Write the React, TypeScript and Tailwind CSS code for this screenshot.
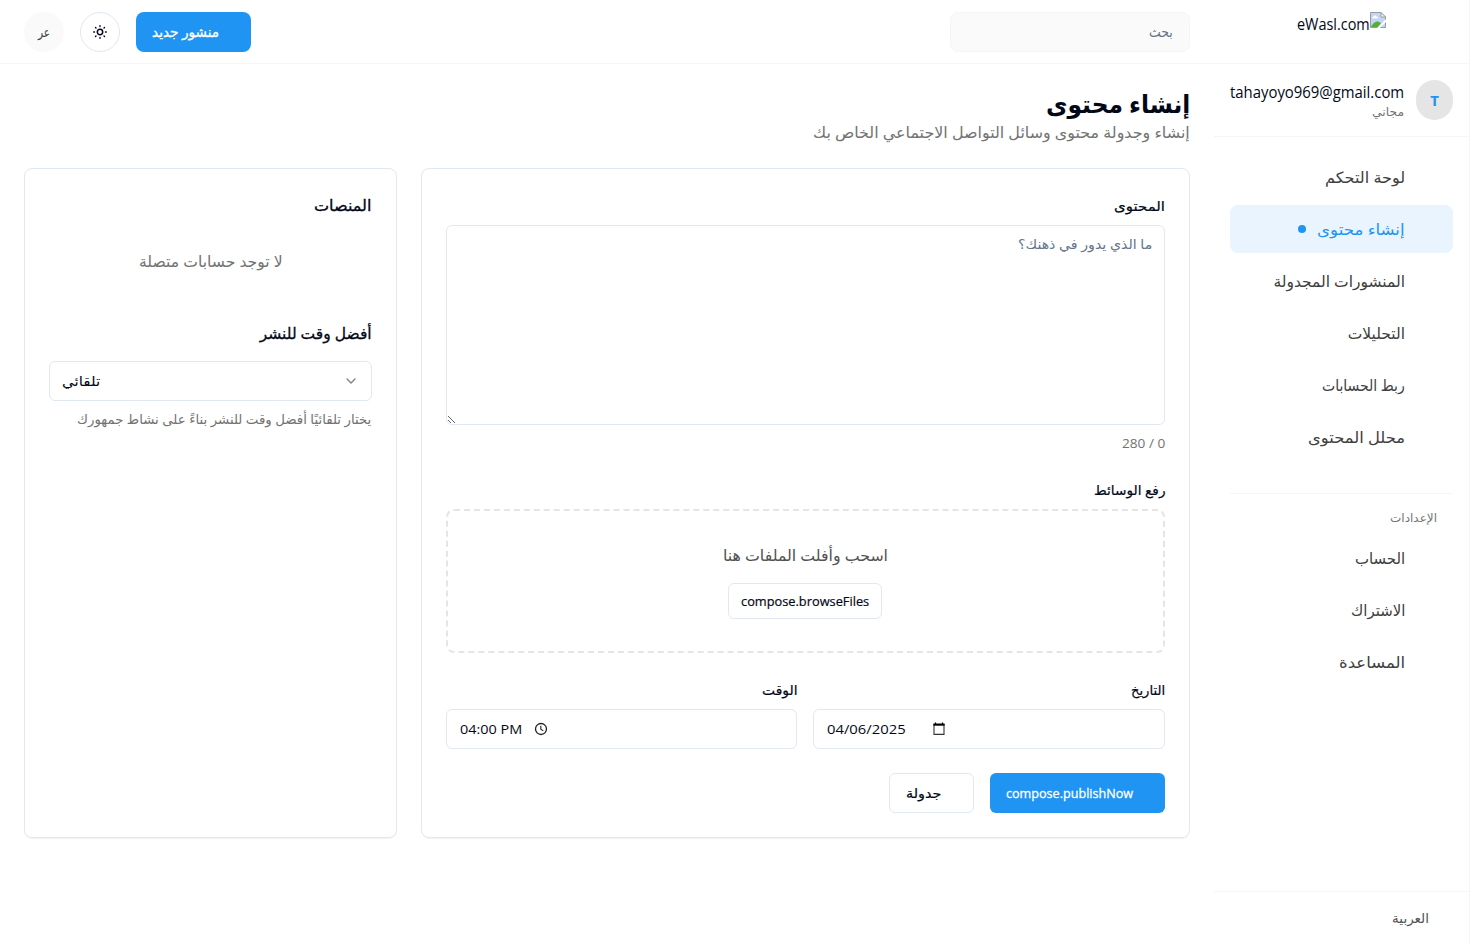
import { useLayoutEffect, useRef, useState } from "react";
import { ChevronDown } from "lucide-react";

/** Single line of text, condensed or widened to fill the width given by its class. */
function Fit({ children, className = "", ltr = false }: { children: string; className?: string; ltr?: boolean }) {
  const outer = useRef<HTMLSpanElement>(null);
  const inner = useRef<HTMLSpanElement>(null);
  const [scale, setScale] = useState(1);
  useLayoutEffect(() => {
    if (outer.current && inner.current && inner.current.offsetWidth > 0) {
      setScale(outer.current.clientWidth / inner.current.offsetWidth);
    }
  }, [children]);
  return (
    <span ref={outer} dir={ltr ? "ltr" : "rtl"} className={`flex shrink-0 ${className}`}>
      <span
        ref={inner}
        className={`block shrink-0 whitespace-nowrap ${ltr ? "origin-left" : "origin-right"}`}
        style={{ transform: `scaleX(${scale})` }}
      >
        {children}
      </span>
    </span>
  );
}

const mainNav = [
  { label: "لوحة التحكم", width: "w-[80px]" },
  { label: "إنشاء محتوى", width: "w-[88px]", active: true },
  { label: "المنشورات المجدولة", width: "w-[132px]" },
  { label: "التحليلات", width: "w-[57px]" },
  { label: "ربط الحسابات", width: "w-[83px]" },
  { label: "محلل المحتوى", width: "w-[97px]" },
];

const settingsNav = [
  { label: "الحساب", width: "w-[50px]" },
  { label: "الاشتراك", width: "w-[54px]" },
  { label: "المساعدة", width: "w-[66px]" },
];

function NavItem({ label, width, active }: { label: string; width: string; active?: boolean }) {
  return (
    <a
      className={`flex h-12 items-center gap-[11px] rounded-lg pr-12 text-[15.5px] leading-6 ${
        active ? "bg-[#e9f4fe] text-[#2094f3]" : "text-[#404040]"
      }`}
    >
      <Fit className={width}>{label}</Fit>
      {active && <span className="size-2 rounded-full bg-[#2094f3]" />}
    </a>
  );
}

function SunIcon() {
  return (
    <svg width="16" height="16" viewBox="0 0 16 16" fill="none" stroke="#020817" strokeLinecap="round">
      <circle cx="8" cy="8" r="2.700" strokeWidth="1.500" />
      <path
        d="M8 1.700V2.500M8 13.500V14.300M1.700 8H2.500M13.500 8H14.300M3.500 3.500 4 4M12 12 12.500 12.500M3.500 12.500 4 12M12 4 12.500 3.500"
        strokeWidth="1.400"
      />
    </svg>
  );
}

function BrokenImage() {
  return (
    <svg width="16" height="16" viewBox="0 0 16 16" className="shrink-0">
      <path d="M.5 .5H11L15.500 5V15.500H.5Z" fill="#c5d5f5" />
      <path d="M2 6.200c0-1 .8-1.600 1.600-1.500.3-1.500 2.600-1.500 3 0 1 0 1.600.600 1.600 1.500Z" fill="#fff" />
      <path d="M1 15c1-3 4-5.500 6.500-5.500 1.500 0 3 1 3.500 2L8 15Z" fill="#56ae37" />
      <path d="M.5 15.500V.5H11L15.500 5V15.500Z" fill="none" stroke="#9b9b9b" />
      <path d="M11 .5V5H15.500Z" fill="#fff" stroke="#9b9b9b" />
      <path d="M16.500 8 8 16.500" stroke="#fff" strokeWidth="2" />
    </svg>
  );
}

function Sidebar() {
  return (
    <aside className="flex w-64 shrink-0 flex-col border-r border-[#f5f5f5]">
      <div className="flex h-16 items-start border-b border-[#f5f5f5] pt-3 pr-[83px]">
        <BrokenImage />
        <Fit ltr className="w-[73px] text-[16px] leading-6">
          eWasl.com
        </Fit>
      </div>
      <div className="flex h-[73px] items-center gap-3 border-b border-[#f5f5f5] px-4">
        <div className="flex h-10 w-[37px] shrink-0 items-center justify-center rounded-full bg-[#e5e5e5] text-[15px] font-bold text-[#2094f3]">
          T
        </div>
        <div className="flex flex-col">
          <Fit ltr className="w-[174px] text-[16px] leading-6">
            tahayoyo969@gmail.com
          </Fit>
          <Fit className="w-8 text-[12px] leading-4 text-[#737373]">مجاني</Fit>
        </div>
      </div>
      <nav className="flex flex-1 flex-col px-4 pt-4">
        <div className="flex flex-col gap-1">
          {mainNav.map((item) => (
            <NavItem key={item.label} {...item} />
          ))}
        </div>
        <div className="mt-8 border-t border-[#f5f5f5] pt-4">
          <Fit className="mr-4 w-[47px] text-[11.5px] leading-4 text-[#737373]">الإعدادات</Fit>
          <div className="mt-2 flex flex-col gap-1">
            {settingsNav.map((item) => (
              <NavItem key={item.label} {...item} />
            ))}
          </div>
        </div>
      </nav>
      <div className="flex h-[53px] items-center border-t border-[#f5f5f5] pr-10">
        <Fit className="w-[37px] text-[13.5px] leading-5 text-[#525252]">العربية</Fit>
      </div>
    </aside>
  );
}

function Header() {
  return (
    <header className="flex h-16 items-center justify-between border-b border-[#f5f5f5] px-6">
      <div className="flex h-10 w-60 items-center rounded-lg border border-[#f5f5f5] bg-[#fafafa] px-4">
        <Fit className="w-6 text-[14px] leading-5 text-[#64748b]">بحث</Fit>
      </div>
      <div className="flex items-center gap-4">
        <button className="flex h-10 w-[115px] items-center rounded-lg bg-[#2094f3] pr-8">
          <Fit className="w-[67px] text-[14px] leading-5 text-white [-webkit-text-stroke:0.3px]">منشور جديد</Fit>
        </button>
        <button className="flex size-10 items-center justify-center rounded-full border border-[#e2e8f0]">
          <SunIcon />
        </button>
        <button className="flex size-10 items-center justify-center rounded-full bg-[#fafafa]">
          <Fit className="w-3 text-[14px] leading-5 text-[#404040]">عر</Fit>
        </button>
      </div>
    </header>
  );
}

function FieldLabel({ children, width }: { children: string; width: string }) {
  return (
    <Fit className={`mb-[7px] pt-px text-[13.5px] leading-6 [-webkit-text-stroke:0.2px] ${width}`}>{children}</Fit>
  );
}

function ComposeCard() {
  return (
    <section className="col-span-2 flex flex-col gap-6 rounded-lg border border-[#e2e8f0] p-6 shadow-2xs">
      <div>
        <FieldLabel width="w-[51px]">المحتوى</FieldLabel>
        <div className="relative h-[200px]">
          <textarea
            aria-label="المحتوى"
            className="block h-[200px] w-full rounded-md border border-[#e2e8f0] bg-transparent px-3 py-2 text-sm outline-none"
          />
          <Fit className="pointer-events-none absolute top-[9px] right-[13px] w-[134px] text-[13.5px] leading-5 text-[#64748b]">
            ما الذي يدور في ذهنك؟
          </Fit>
        </div>
        <Fit className="mt-2 w-[43px] text-[13px] leading-5 text-[#737373]">0 / 280</Fit>
      </div>
      <div>
        <FieldLabel width="w-[72px]">رفع الوسائط</FieldLabel>
        <div className="flex h-36 flex-col items-center gap-4 rounded-lg border-2 border-dashed border-[#e5e5e5] py-8">
          <Fit className="w-[165px] text-[15.5px] leading-6 text-[#525252]">اسحب وأفلت الملفات هنا</Fit>
          <button className="flex h-9 w-[154px] items-center justify-center rounded-md border border-[#e2e8f0]">
            <Fit ltr className="w-[128px] text-[13.5px] leading-5 [-webkit-text-stroke:0.2px]">
              compose.browseFiles
            </Fit>
          </button>
        </div>
      </div>
      <div className="grid grid-cols-2 gap-4">
        <div>
          <FieldLabel width="w-[34px]">التاريخ</FieldLabel>
          <div dir="ltr" className="flex h-10 items-center rounded-md border border-[#e2e8f0] px-[13px]">
            <Fit ltr className="w-[79px] text-[13.5px] leading-5">04/06/2025</Fit>
            <svg width="14" height="14" viewBox="0 0 14 14" className="ml-[26px]">
              <path d="M3.500 .5V2M10.500 .5V2" stroke="#020202" strokeWidth="1.200" />
              <path d="M2 2.500H12V12.400H2Z" fill="none" stroke="#333" strokeWidth="1.100" />
              <path d="M1.450 1.500H12.550V3.700H1.450Z" fill="#020202" />
            </svg>
          </div>
        </div>
        <div>
          <FieldLabel width="w-9">الوقت</FieldLabel>
          <div dir="ltr" className="flex h-10 items-center rounded-md border border-[#e2e8f0] px-[13px]">
            <Fit ltr className="w-[62px] text-[13.5px] leading-5">04:00 PM</Fit>
            <svg width="14" height="14" viewBox="0 0 14 14" className="ml-3" fill="none" stroke="#222">
              <circle cx="7" cy="7" r="5.500" strokeWidth="1.300" />
              <path d="M6.800 3.700V7.200L9.300 8.900" strokeWidth="1.100" />
            </svg>
          </div>
        </div>
      </div>
      <div className="flex gap-4">
        <button className="flex h-10 w-[175px] items-center rounded-md bg-[#2094f3] pr-8">
          <Fit ltr className="w-[127px] text-[13.5px] leading-5 text-white [-webkit-text-stroke:0.3px]">
            compose.publishNow
          </Fit>
        </button>
        <button className="flex h-10 w-[85px] items-center rounded-md border border-[#e2e8f0] pr-8">
          <Fit className="w-[35px] text-[13.5px] leading-5 [-webkit-text-stroke:0.2px]">جدولة</Fit>
        </button>
      </div>
    </section>
  );
}

function PlatformsCard() {
  return (
    <section className="rounded-lg border border-[#e2e8f0] p-6 shadow-2xs">
      <Fit className="w-[57px] text-[15.5px] leading-6 [-webkit-text-stroke:0.3px]">المنصات</Fit>
      <div className="flex justify-center py-8">
        <Fit className="w-[144px] text-[15.5px] leading-6 text-[#737373]">لا توجد حسابات متصلة</Fit>
      </div>
      <Fit className="my-4 w-[112px] text-[15.5px] leading-6 [-webkit-text-stroke:0.3px]">أفضل وقت للنشر</Fit>
      <button className="flex h-10 w-full items-center justify-between rounded-md border border-[#e2e8f0] px-3">
        <ChevronDown size={16} className="text-[#80838b]" />
        <Fit className="w-[38px] text-[13.5px] leading-5">تلقائي</Fit>
      </button>
      <Fit className="mt-2 w-[294px] text-[13.5px] leading-5 text-[#737373]">
        يختار تلقائيًا أفضل وقت للنشر بناءً على نشاط جمهورك
      </Fit>
    </section>
  );
}

export default function App() {
  return (
    <div
      dir="rtl"
      className="flex h-[944px] w-full overflow-hidden bg-white font-['Open_Sans','DejaVu_Sans',sans-serif] text-[#020817]"
    >
      <Sidebar />
      <div className="flex min-w-0 flex-1 flex-col">
        <Header />
        <main className="p-6">
          <h1>
            <Fit className="w-[144px] pb-0.5 text-[25px] leading-[30px] font-bold">إنشاء محتوى</Fit>
          </h1>
          <Fit className="w-[377px] text-[15.5px] leading-6 text-[#737373]">
            إنشاء وجدولة محتوى وسائل التواصل الاجتماعي الخاص بك
          </Fit>
          <div className="mt-6 grid h-[670px] grid-cols-3 gap-6">
            <ComposeCard />
            <PlatformsCard />
          </div>
        </main>
      </div>
    </div>
  );
}
